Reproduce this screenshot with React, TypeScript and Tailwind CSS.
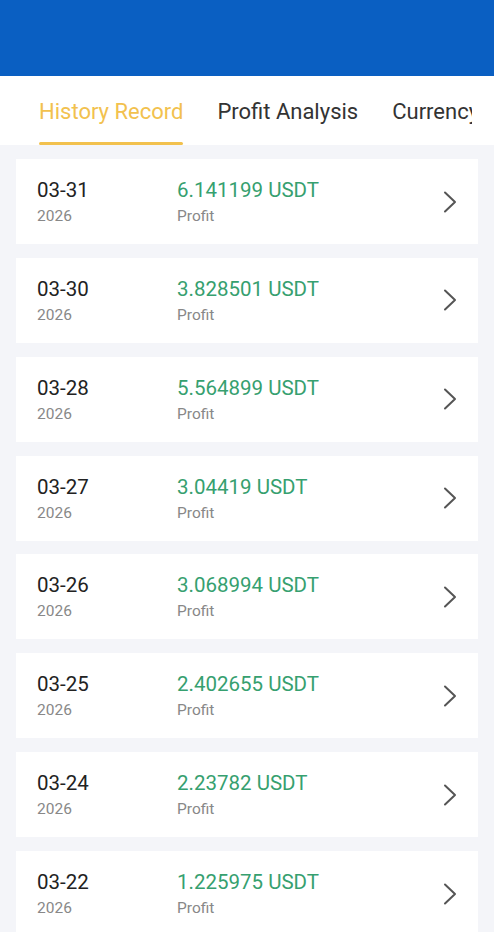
import React from 'react';

interface Record {
  date: string;
  year: string;
  amount: string;
}

const records: Record[] = [
  { date: '03-31', year: '2026', amount: '6.141199' },
  { date: '03-30', year: '2026', amount: '3.828501' },
  { date: '03-28', year: '2026', amount: '5.564899' },
  { date: '03-27', year: '2026', amount: '3.04419' },
  { date: '03-26', year: '2026', amount: '3.068994' },
  { date: '03-25', year: '2026', amount: '2.402655' },
  { date: '03-24', year: '2026', amount: '2.23782' },
  { date: '03-22', year: '2026', amount: '1.225975' },
];

const tabs = ['History Record', 'Profit Analysis', 'Currency'];

const Chevron = () => (
  <svg width="14" height="22" viewBox="0 0 14 22" fill="none">
    <polyline points="2,1.5 12,11 2,20.5" stroke="#555" strokeWidth="2" strokeLinecap="round" strokeLinejoin="round" />
  </svg>
);

const RecordCard: React.FC<{ item: Record }> = ({ item }) => (
  <div className="flex items-center h-[85px] bg-white pl-[21px] pr-[21px] mb-[13.86px]">
    <div className="w-[140px] flex flex-col">
      <span className="text-[20.5px] leading-[26px] text-[#222]">{item.date}</span>
      <span className="text-[15.5px] leading-[20px] mt-[3px] text-[#888]">{item.year}</span>
    </div>
    <div className="flex-1 flex flex-col">
      <span className="text-[20.5px] leading-[26px] text-[#36a06f]">{item.amount} USDT</span>
      <span className="text-[15.5px] leading-[20px] mt-[3px] text-[#888]">Profit</span>
    </div>
    <Chevron />
  </div>
);

export default function App() {
  return (
    <div className="w-[494px] h-[932px] overflow-hidden bg-[#f4f5f9]" style={{ fontFamily: 'Roboto, "Noto Sans", sans-serif' }}>
      <div className="h-[76px] bg-[#0a5fc2]" />
      <div className="h-[69px] bg-white pl-[39px] pr-[22px]">
        <div className="flex gap-[34px] overflow-hidden h-full">
          {tabs.map((t, i) => (
            <div key={t} className="flex flex-col shrink-0 pt-[24px]">
              <span className={`text-[22px] leading-[24px] ${i === 0 ? 'text-[#f2c14e]' : 'text-[#333]'}`}>{t}</span>
              <div className={`mt-auto h-[3px] rounded-full ${i === 0 ? 'bg-[#f2c14e]' : 'bg-transparent'}`} />
            </div>
          ))}
        </div>
      </div>
      <div className="px-[16px] pt-[14px]">
        {records.map((r) => (
          <RecordCard key={r.date} item={r} />
        ))}
      </div>
    </div>
  );
}
